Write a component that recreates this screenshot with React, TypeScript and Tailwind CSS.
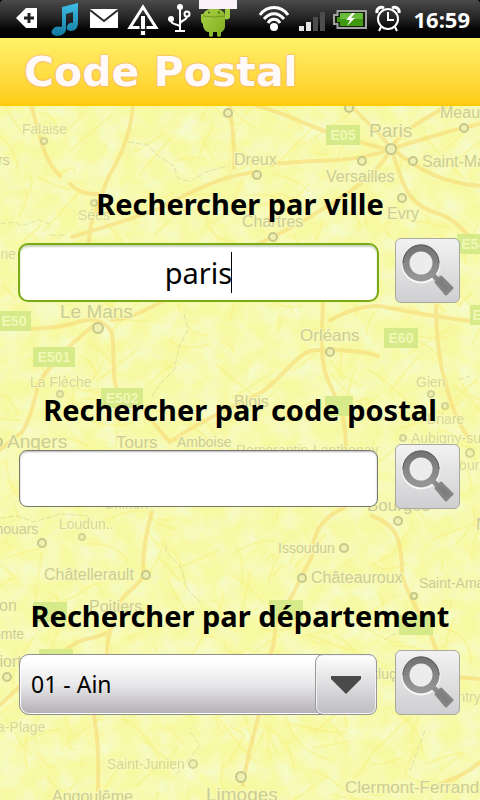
import { useState } from 'react';
import type { ReactNode } from 'react';

type Place = { name: string; x: number; y: number; size: number; dot?: [number, number, number]; faint?: boolean };

const places: Place[] = [
  { name: 'Falaise', x: 22, y: 134, size: 14, dot: [44, 141, 3], faint: true },
  { name: 'rs', x: -2, y: 165, size: 14 },
  { name: 'Sées', x: 78, y: 220, size: 14, dot: [94, 203, 3], faint: true },
  { name: 'Dreux', x: 234, y: 165, size: 16, dot: [257, 175, 4] },
  { name: 'Paris', x: 369, y: 137, size: 19, dot: [391, 149, 5] },
  { name: 'Meaux', x: 440, y: 118, size: 16, dot: [464, 128, 4] },
  { name: 'Versailles', x: 326, y: 182, size: 16, dot: [362, 161, 4] },
  { name: 'Saint-Maur', x: 422, y: 167, size: 16, dot: [413, 161, 4] },
  { name: 'Evry', x: 387, y: 219, size: 16, dot: [402, 198, 4] },
  { name: 'Chartres', x: 242, y: 227, size: 16, dot: [273, 237, 4] },
  { name: 'enne', x: -15, y: 259, size: 14, faint: true },
  { name: 'Le Mans', x: 60, y: 318, size: 19, dot: [98, 328, 5] },
  { name: 'La Flèche', x: 30, y: 387, size: 14, dot: [60, 394, 3], faint: true },
  { name: 'Orléans', x: 300, y: 341, size: 17, dot: [330, 352, 4] },
  { name: 'Gien', x: 416, y: 387, size: 14, dot: [431, 394, 3], faint: true },
  { name: 'Blois', x: 234, y: 407, size: 16 },
  { name: 'Briare', x: 427, y: 424, size: 14, dot: [445, 406, 3], faint: true },
  { name: 'Angers', x: 7, y: 448, size: 19, dot: [-2, 442, 4] },
  { name: 'Tours', x: 116, y: 448, size: 17 },
  { name: 'Amboise', x: 177, y: 447, size: 14 },
  { name: 'Romorantin-Lanthenay', x: 236, y: 455, size: 14, faint: true },
  { name: 'Aubigny-sur', x: 411, y: 443, size: 14, dot: [403, 438, 3], faint: true },
  { name: 'Cours', x: 449, y: 470, size: 14, dot: [470, 453, 4], faint: true },
  { name: 'Bourges', x: 367, y: 511, size: 17, dot: [398, 521, 4] },
  { name: 'Chinon', x: 104, y: 509, size: 14, faint: true },
  { name: 'N', x: 476, y: 530, size: 17 },
  { name: 'Thouars', x: -13, y: 534, size: 14, dot: [42, 543, 4] },
  { name: 'Loudun..', x: 59, y: 529, size: 14, dot: [82, 537, 3], faint: true },
  { name: 'Issoudun', x: 278, y: 553, size: 14, dot: [344, 548, 4] },
  { name: 'Châteauroux', x: 311, y: 583, size: 16, dot: [302, 578, 4] },
  { name: 'Châtellerault', x: 44, y: 580, size: 16, dot: [146, 575, 4] },
  { name: 'Saint-Amand', x: 419, y: 588, size: 14, dot: [414, 596, 3] },
  { name: 'on', x: -1, y: 611, size: 16 },
  { name: 'Poitiers', x: 89, y: 612, size: 16 },
  { name: 'omte', x: -7, y: 639, size: 14 },
  { name: 'Niort', x: -12, y: 667, size: 16, dot: [7, 677, 4] },
  { name: 'Montluçon', x: 347, y: 679, size: 14 },
  { name: 'mentry', x: 438, y: 702, size: 14, faint: true },
  { name: 'la-Plage', x: -6, y: 732, size: 14, faint: true },
  { name: 'Saint-Junien', x: 107, y: 769, size: 14, dot: [193, 764, 4], faint: true },
  { name: 'Limoges', x: 206, y: 801, size: 19, dot: [241, 777, 5] },
  { name: 'Clermont-Ferrand', x: 345, y: 793, size: 17 },
  { name: 'Angoulême', x: 52, y: 802, size: 16 },
];

const shields: { label?: string; x: number; y: number; w: number }[] = [
  { label: 'E05', x: 326, y: 125, w: 34 },
  { label: 'E54', x: 457, y: 234, w: 34 },
  { label: 'E50', x: -3, y: 311, w: 34 },
  { label: 'E60', x: 384, y: 328, w: 34 },
  { label: 'E15', x: 470, y: 305, w: 30 },
  { label: 'E501', x: 33, y: 347, w: 42 },
  { label: 'E502', x: 101, y: 388, w: 42 },
  { x: 325, y: 396, w: 28 },
  { x: 33, y: 602, w: 34 },
  { x: 269, y: 600, w: 34 },
  { x: 399, y: 615, w: 34 },
  { x: 39, y: 649, w: 34 },
];

const mainRoads = [
  'M133 106 C130 140 118 160 108 178 L98 204 C90 222 88 235 89 250',
  'M70 184 C80 194 90 194 98 194',
  'M72 237 C100 228 130 220 160 208 C195 190 220 176 257 172',
  'M257 106 C285 112 310 128 340 136 C360 141 375 148 391 149 C420 140 450 130 480 124',
  'M270 165 C310 158 350 165 391 149 C410 160 430 182 480 186',
  'M391 149 C378 175 340 202 273 237 M391 149 C402 175 402 205 440 214 C460 222 468 236 480 252',
  'M391 149 C400 130 425 120 446 106 M391 149 C380 130 360 118 352 106',
  'M0 327 C30 331 60 328 82 321 C94 318 108 322 112 334 C116 360 110 380 120 395',
  'M98 322 C75 340 55 358 38 384 C34 405 30 420 22 432 C12 440 6 444 0 450',
  'M112 320 C140 318 160 300 185 290 C220 270 240 250 273 237',
  'M323 302 C322 330 320 350 325 372 C332 395 346 405 346 450',
  'M330 320 C350 310 370 302 390 308 C410 312 440 318 480 322',
  'M330 352 C300 342 292 370 262 392 C240 404 200 420 170 442 C158 430 150 418 144 410',
  'M330 349 C350 352 365 350 378 356',
  'M436 306 C436 330 438 350 442 370 C450 400 455 420 470 440',
  'M344 508 C320 518 312 535 312 556 C302 575 296 590 288 602 M372 516 C395 524 402 536 402 575 C408 600 430 625 436 650',
  'M152 512 C144 540 142 560 144 575 C135 590 125 592 118 604 C112 628 106 640 107 655',
  'M110 631 C95 640 90 636 78 642 C50 658 26 680 0 705',
  'M94 716 C100 750 98 770 98 800',
  'M260 710 C254 735 246 760 243 785',
  'M435 674 C450 676 465 678 480 679 M480 762 C465 775 455 778 440 784',
  'M278 602 C274 630 276 650 266 664',
  'M31 106 C38 125 42 160 60 176',
  'M230 106 C232 130 236 150 234 168',
];

const riverPaths = [
  'M128 142 L148 145 L158 156 L174 166 L178 178 L190 182 L205 172 L228 166',
  'M0 224 L14 222 L22 226 L38 220 L50 224 M50 235 L64 235',
  'M184 314 L188 330 L180 345 L174 370 L160 384 L152 396',
  'M166 546 L166 552 L180 566 L188 590 L202 604',
  'M425 730 L418 750 L410 770 M384 640 L398 632 M458 380 L470 376',
  'M190 732 L200 745 L188 760 L175 776',
  'M0 518 L18 516 L34 522 L60 514 L88 516',
];

// Deterministic so that the minor roads stay the same on every render.
const createRandom = (seed: number) => {
  let state = seed;
  return () => {
    state = (state * 16807) % 2147483647;
    return state / 2147483647;
  };
};

const buildMinorRoads = () => {
  const random = createRandom(4271);
  return Array.from({ length: 360 }, () => {
    const x = random() * 500 - 10;
    const y = 106 + random() * 694;
    const dx = (random() - 0.5) * 90;
    const dy = (random() - 0.5) * 90;
    const bend = (random() - 0.5) * 24;
    return `M${x.toFixed(0)} ${y.toFixed(0)}q${(dx / 2 + bend).toFixed(0)} ${(dy / 2 - bend).toFixed(0)} ${dx.toFixed(0)} ${dy.toFixed(0)}`;
  });
};

const minorRoads = buildMinorRoads();

const MapBackground = () => (
  <svg
    className="absolute inset-0 h-full w-full"
    viewBox="0 106 480 694"
    preserveAspectRatio="xMidYMin slice"
    aria-hidden="true"
  >
    <defs>
      <filter id="terrain" x="0" y="0" width="100%" height="100%">
        <feTurbulence type="fractalNoise" baseFrequency="0.05" numOctaves="3" seed="8" />
        <feColorMatrix values="0 0 0 0 0.92  0 0 0 0 0.97  0 0 0 0 0.66  1.6 0 0 0 -0.55" />
      </filter>
    </defs>
    <rect x="0" y="106" width="480" height="694" fill="#f7f9a2" />
    <rect x="0" y="106" width="480" height="694" filter="url(#terrain)" />
    <g fill="none" stroke="#f8f07c" strokeWidth="2" opacity="0.45">
      {minorRoads.map((d, index) => (
        <path key={index} d={d} />
      ))}
    </g>
    <g fill="none" stroke="#dfe2a0" strokeWidth="1" strokeDasharray="6 2">
      {riverPaths.map((d) => (
        <path key={d} d={d} />
      ))}
    </g>
    <g fill="none" stroke="#f7df7e" strokeWidth="4" strokeLinecap="round" opacity="0.7">
      {mainRoads.map((d) => (
        <path key={d} d={d} />
      ))}
    </g>
    <g fill="#eff0b0" stroke="#c6c88a" strokeWidth="2">
      <circle cx="228" cy="113" r="4" />
      <circle cx="349" cy="108" r="4" />
    </g>
    <g fontFamily="Liberation Sans, Arial, sans-serif">
      {shields.map((shield) => (
        <g key={`${shield.x}-${shield.y}`}>
          <rect x={shield.x} y={shield.y} width={shield.w} height="20" fill="#d6ea8a" />
          {shield.label ? (
            <text
              x={shield.x + shield.w / 2}
              y={shield.y + 15}
              fontSize="14"
              fontWeight="bold"
              textAnchor="middle"
              fill="#f1f8b4"
            >
              {shield.label}
            </text>
          ) : null}
        </g>
      ))}
      {places.map((place) => (
        <g key={place.name} opacity={place.faint ? 0.75 : 1}>
          {place.dot ? (
            <circle
              cx={place.dot[0]}
              cy={place.dot[1]}
              r={place.dot[2]}
              fill="#eff0b0"
              stroke="#c6c88a"
              strokeWidth="2"
            />
          ) : null}
          <text
            x={place.x}
            y={place.y}
            fontSize={place.size}
            fill="#cbcd92"
            stroke="#f8f9b8"
            strokeWidth="2"
            paintOrder="stroke"
          >
            {place.name}
          </text>
        </g>
      ))}
    </g>
  </svg>
);

const StatusBar = () => (
  <div className="bg-black">
    <div className="flex h-[38px] items-center justify-between rounded-t bg-linear-to-b from-[#4b4b4b] via-[#232323] to-black pr-[10px] pl-3">
      <div className="flex">
        <svg width="34" height="38" viewBox="12 0 34 38" aria-hidden="true">
          <path d="M16 18 L26 8 H37 V28 H26 Z" fill="#fff" />
          <path d="M29 13 V23 M24 18 H34" stroke="#222" strokeWidth="3" />
        </svg>
        <svg width="38" height="38" viewBox="46 0 38 38" aria-hidden="true">
          <defs>
            <linearGradient id="note" x1="0" y1="0" x2="0" y2="1">
              <stop offset="0" stopColor="#3fc0e8" />
              <stop offset="1" stopColor="#12789f" />
            </linearGradient>
          </defs>
          <path
            d="M62 7 L78 3 V23 C78 28 75 31 71 31 C67 31 66 28 67 26 C68 23 71 22 73 23 V12 L66 14 V29 C66 33 62 36 57 36 C52 36 50 32 53 29 C55 26 59 26 61 27 L62 26 Z"
            fill="url(#note)"
          />
        </svg>
        <svg width="38" height="38" viewBox="84 0 38 38" aria-hidden="true">
          <path d="M90 9 H118 V28 H90 Z" fill="#fff" />
          <path d="M90 10 L104 21 L118 10" fill="none" stroke="#2a2a2a" strokeWidth="2" />
        </svg>
        <svg width="42" height="38" viewBox="122 0 42 38" aria-hidden="true">
          <path d="M143 7 L156 27.500 H130 Z" fill="none" stroke="#fff" strokeWidth="3" />
          <path d="M143 15 V35" stroke="#1c1c1c" strokeWidth="7" />
          <path d="M143 16 V29 M143 31 V35" stroke="#fff" strokeWidth="4" />
        </svg>
        <svg width="32" height="38" viewBox="164 0 32 38" aria-hidden="true">
          <g fill="none" stroke="#fff" strokeWidth="2">
            <path d="M180 8 V31 M175 31 H185 M171 20 V21 C171 25 180 24 180 27 M187 16 C187 21 180 20 180 24" />
            <circle cx="187" cy="14" r="2.500" />
          </g>
          <circle cx="180" cy="7" r="3" fill="#fff" />
          <circle cx="171" cy="19" r="3" fill="#fff" />
        </svg>
        <svg width="44" height="38" viewBox="196 0 44 38" aria-hidden="true">
          <defs>
            <linearGradient id="robot" x1="0" y1="0" x2="1" y2="1">
              <stop offset="0" stopColor="#a9cf48" />
              <stop offset="1" stopColor="#7fae1c" />
            </linearGradient>
          </defs>
          <path
            d="M203 16 C203 6 225 6 225 16 V26 C225 30 222 32 221 32 V35 C221 37.500 217 37.500 217 35 V32 H213 V35 C213 37.500 209 37.500 209 35 V32 C206 32 204 30 203 26 Z"
            fill="url(#robot)"
          />
          <path d="M225 9 C225 6 230 6 230 9 V17 C230 19 227 20 225 19 Z M201 14 H203 V24 C201 23 201 20 201 18 Z" fill="#9dc93c" />
          <path d="M203 16 Q214 18 225 16" fill="none" stroke="#6c9a1c" strokeWidth="1" />
          <path d="M199 0 H237 V9 H199 Z" fill="#f9f3f9" />
          <circle cx="209" cy="12.500" r="1" fill="#415c12" />
          <circle cx="219" cy="12.500" r="1" fill="#415c12" />
        </svg>
      </div>
      <div className="flex items-center">
        <svg width="40" height="38" viewBox="254 0 40 38" aria-hidden="true">
          <g fill="none" stroke="#fff" strokeWidth="3">
            <path d="M259 15 C266 5 280 5 287 15" />
            <path d="M263 19 C269 12 277 12 283 19" />
            <path d="M267 23 C270 18 276 18 279 23" />
          </g>
          <circle cx="273" cy="27" r="4" fill="#fff" />
        </svg>
        <svg width="34" height="38" viewBox="294 0 34 38" aria-hidden="true">
          <path d="M298 26 H303 V31 H298 Z M305 22 H310 V31 H305 Z" fill="#e4e4e4" />
          <path d="M312 17 H317 V31 H312 Z M319 12 H324 V31 H319 Z" fill="#4c4c4c" />
        </svg>
        <svg width="42" height="38" viewBox="328 0 42 38" aria-hidden="true">
          <path d="M336.500 11 H365 V28 H336.500 V24 H333 V15 H336.500 Z" fill="#16200c" stroke="#a2a2a2" strokeWidth="2" />
          <path d="M339 13 H362 V26 H339 V22 H336 V17 H339 Z" fill="#3f9a12" />
          <path d="M339 13 H362 V19 H339 Z" fill="#69b93a" />
          <path d="M351 13 L345 20 H349 L346 26 L354 18 H350 L354 13 Z" fill="#fff" />
        </svg>
        <svg width="36" height="38" viewBox="370 0 36 38" aria-hidden="true">
          <g fill="none" stroke="#fff" strokeWidth="2">
            <circle cx="387" cy="19" r="10" />
            <path d="M387 12 V20 H393 M380 27 L378 31 M394 27 L396 31" />
            <path d="M376 13 C375 9 379 6 383 8 M398 13 C399 9 395 6 391 8" strokeWidth="3" />
          </g>
        </svg>
        <time className="pl-1.5 text-[22px] leading-7 font-bold text-white">16:59</time>
      </div>
    </div>
  </div>
);

const SearchButton = ({ label }: { label: string }) => (
  <button
    type="submit"
    aria-label={label}
    className="size-[65px] shrink-0 rounded-md border border-[#a9a9a0] bg-linear-to-b from-[#f2f2f2] to-[#cfcfd2]"
  >
    <svg className="size-[63px]" viewBox="1 1 63 63" aria-hidden="true">
      <defs>
        <linearGradient id="lens" x1="0" y1="0" x2="0" y2="1">
          <stop offset="0" stopColor="#747474" />
          <stop offset="1" stopColor="#969696" />
        </linearGradient>
      </defs>
      <circle cx="26" cy="26" r="15" fill="none" stroke="#f7f7f7" strokeWidth="9" />
      <path d="M36 35 L44 43" stroke="#8a8a8a" strokeWidth="5" />
      <path
        d="M41 44 L46 39 L57 50 L51 56 Z"
        fill="#7e7e7e"
        stroke="#858585"
        strokeWidth="3"
        strokeLinejoin="round"
      />
      <circle cx="26" cy="25" r="15" fill="#ececec" stroke="url(#lens)" strokeWidth="7" />
      <path d="M8 25 A18 18 0 0 1 44 25" fill="none" stroke="#5c5c5c" strokeWidth="1" />
    </svg>
  </button>
);

type SearchSectionProps = {
  id: string;
  title: string;
  children: ReactNode;
};

const SearchSection = ({ id, title, children }: SearchSectionProps) => (
  <form onSubmit={(event) => event.preventDefault()}>
    <label htmlFor={id} className="block text-center text-[29px] leading-10 font-bold whitespace-nowrap text-black">
      {title}
    </label>
    <div className="mt-3.5 flex items-end gap-4 pr-5 pl-[18px]">
      <div className="relative min-w-0 flex-1">{children}</div>
      <SearchButton label={title} />
    </div>
  </form>
);

const App = () => {
  const [city, setCity] = useState('paris');
  const [postcode, setPostcode] = useState('');

  return (
    <div className="flex min-h-screen flex-col overflow-hidden font-['Noto_Sans',sans-serif]">
      <StatusBar />
      <header className="bg-linear-to-b from-[#fff168] to-[#ffcb03] px-6">
        <h1 className="font-['DejaVu_Sans',Verdana,sans-serif] text-[41px] leading-[68px] font-bold text-[#fffaf8] [text-shadow:0_0_2px_#eda573,0_0_2px_#f0b080]">
          Code Postal
        </h1>
      </header>
      <main className="relative flex-1 bg-[#f7f9a2]">
        <MapBackground />
        <div className="relative flex flex-col gap-[87px] pt-[78px] pb-[84px]">
          <SearchSection id="city" title="Rechercher par ville">
            <input
              id="city"
              type="text"
              value={city}
              onChange={(event) => setCity(event.target.value)}
              className="mb-px block h-[59px] w-full rounded-[10px] border-2 border-[#7aab14] bg-white px-3 text-center text-[29px] text-black shadow-[inset_0_2px_2px_#c9d2bd] outline-none"
            />
            <span className="absolute top-[9px] left-1/2 ml-8 h-[41px] w-px bg-black" />
          </SearchSection>
          <SearchSection id="postcode" title="Rechercher par code postal">
            <div className="px-px pb-0.5">
              <input
                id="postcode"
                type="text"
                value={postcode}
                onChange={(event) => setPostcode(event.target.value)}
                className="block h-[57px] w-full rounded-lg border border-[#77776c] bg-white px-3 text-center text-[29px] text-black shadow-[inset_0_1px_2px_#b4b4bc] outline-none"
              />
            </div>
          </SearchSection>
          <SearchSection id="department" title="Rechercher par département">
            <div className="relative mr-0.5 ml-px">
              <select
                id="department"
                className="block h-[61px] w-full appearance-none rounded-[10px] border border-[#8f8f8f] bg-linear-to-b from-white from-10% via-[#e9e8ea] via-50% to-[#b3b0b4] pr-16 pl-[11px] text-[23px] text-black shadow-[inset_0_0_0_1px_#ffffff] outline-none"
              >
                <option>01 - Ain</option>
              </select>
              <div className="pointer-events-none absolute inset-y-0 right-0 flex w-[62px] items-center justify-center rounded-[8px] border border-[#98979a] bg-linear-to-b from-white to-[#bebcc0] shadow-[inset_0_0_0_1px_#f3f3f3]">
                <svg width="30" height="18" viewBox="0 0 30 18" aria-hidden="true">
                  <path d="M0 0 H30 V3 L15 18 L0 3 Z" fill="#4a4a4a" />
                </svg>
              </div>
            </div>
          </SearchSection>
        </div>
      </main>
    </div>
  );
};

export default App;
